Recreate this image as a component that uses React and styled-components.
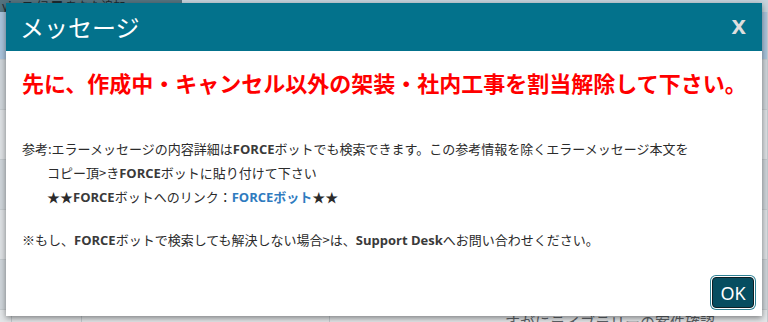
import React from 'react';
import styled, { createGlobalStyle } from 'styled-components';

const GlobalStyle = createGlobalStyle`
  html, body {
    margin: 0;
    padding: 0;
    height: 100%;
  }
  body {
    font-family: "Noto Sans CJK JP", "Noto Sans", sans-serif;
    background: #d9dee2;
    overflow: hidden;
  }
`;

const Page = styled.div`
  position: relative;
  width: 768px;
  height: 322px;
  overflow: hidden;
  display: flex;
  flex-direction: column;
`;

const TopBar = styled.div`
  display: flex;
  height: 12px;
  flex-shrink: 0;
`;

const TopTabs = styled.div`
  width: 180px;
  background: #55737f;
  color: #1c2a30;
  font-size: 12px;
  line-height: 12px;
  white-space: nowrap;
  padding-left: 2px;
`;

const TopRest = styled.div`
  flex: 1;
  background: #c6d3dc;
`;

const BackRow = styled.div`
  display: grid;
  grid-template-columns: 12px 70px 248px 1fr;
  height: ${(p) => p.h}px;
  flex-shrink: 0;
  background: ${(p) => p.bg};
  border-bottom: 1px solid #c4cace;
`;

const BackCell = styled.div`
  border-right: 1px solid #c4cace;
  color: #5d6266;
  font-size: 15px;
  line-height: 20px;
  padding-left: ${(p) => p.pad || 0}px;
  padding-top: 2px;
  white-space: nowrap;
`;

const Dialog = styled.div`
  position: absolute;
  left: 6px;
  top: 3px;
  width: 756px;
  height: 313px;
  background: #fff;
  box-shadow: 0 2px 6px rgba(0, 0, 0, 0.45);
  display: flex;
  flex-direction: column;
`;

const Header = styled.div`
  height: 48px;
  background: #03728c;
  display: flex;
  align-items: center;
  justify-content: space-between;
  padding: 0 16px 0 14px;
  flex-shrink: 0;
`;

const Title = styled.h1`
  margin: 0;
  font-size: 24px;
  font-weight: 400;
  color: #fff;
  line-height: 1;
`;

const Close = styled.button`
  border: 0;
  background: none;
  padding: 0;
  color: #dedede;
  font-family: "Liberation Sans", Arial, sans-serif;
  font-size: 26px;
  font-weight: 700;
  line-height: 1;
  margin-top: -4px;
  cursor: pointer;
`;

const Body = styled.div`
  flex: 1;
  display: flex;
  flex-direction: column;
  padding: 16px 16px 0 16px;
`;

const ErrorHeading = styled.h2`
  margin: 0;
  color: #ff0000;
  font-size: 22px;
  font-weight: 700;
  line-height: 30px;
  white-space: nowrap;
`;

const Note = styled.div`
  margin-top: 40px;
  color: #2b2b2b;
  font-size: 13px;
  line-height: 24px;
`;

const Line = styled.div`
  padding-left: ${(p) => (p.indent ? 25 : 0)}px;
  white-space: nowrap;
`;

const Latin = styled.span`
  font-family: "Open Sans", "Noto Sans", sans-serif;
  font-weight: 700;
  color: #3a3a3a;
`;

const Link = styled.a`
  color: #2f7bbf;
  font-family: "Open Sans", "Noto Sans CJK JP", sans-serif;
  font-weight: 700;
  text-decoration: none;
`;

const Footnote = styled.div`
  margin-top: 19px;
  color: #2b2b2b;
  font-size: 13px;
  line-height: 24px;
  white-space: nowrap;
`;

const Footer = styled.div`
  display: flex;
  justify-content: flex-end;
  padding: 0 8px 8px 0;
  flex-shrink: 0;
`;

const OkButton = styled.button`
  width: 42px;
  height: 31px;
  border-radius: 4px;
  border: 1px solid #0c1f25;
  background: #064d60;
  color: #fff;
  font-family: "Noto Sans", sans-serif;
  font-size: 18px;
  line-height: 1;
  padding: 0;
  box-shadow: 0 0 0 1px #ffffff, 0 0 0 2px #2f8295;
  cursor: pointer;
`;

const rows = [
  { h: 47, bg: '#a9c3da' },
  { h: 49, bg: '#cfd5da' },
  { h: 49, bg: '#dde1e4' },
  { h: 49, bg: '#cfd5da' },
  { h: 49, bg: '#dde1e4' },
  { h: 49, bg: '#cfd5da' },
];

export default function App() {
  return (
    <>
      <GlobalStyle />
      <Page>
        <TopBar>
          <TopTabs>yin ヨ 幻 ■ あなた追加</TopTabs>
          <TopRest />
        </TopBar>
        {rows.map((r, i) => (
          <BackRow key={i} h={r.h} bg={r.bg}>
            <BackCell />
            <BackCell />
            <BackCell />
            <BackCell />
          </BackRow>
        ))}
        <BackRow h={30} bg="#e3e6e8">
          <BackCell />
          <BackCell />
          <BackCell />
          <BackCell pad={175}>すがにライブラリーの案件確認</BackCell>
        </BackRow>

        <Dialog role="dialog">
          <Header>
            <Title>メッセージ</Title>
            <Close aria-label="close">x</Close>
          </Header>
          <Body>
            <ErrorHeading>
              先に、作成中・キャンセル以外の架装・社内工事を割当解除して下さい。
            </ErrorHeading>
            <Note>
              <Line>
                参考:エラーメッセージの内容詳細は<Latin>FORCE</Latin>
                ボットでも検索できます。この参考情報を除くエラーメッセージ本文を
              </Line>
              <Line indent>
                コピー頂&gt;き<Latin>FORCE</Latin>ボットに貼り付けて下さい
              </Line>
              <Line indent>
                ★★<Latin>FORCE</Latin>ボットへのリンク：
                <Link href="#">FORCEボット</Link>★★
              </Line>
            </Note>
            <Footnote>
              ※もし、<Latin>FORCE</Latin>ボットで検索しても解決しない場合&gt;は、
              <Latin>Support Desk</Latin>へお問い合わせください。
            </Footnote>
          </Body>
          <Footer>
            <OkButton>OK</OkButton>
          </Footer>
        </Dialog>
      </Page>
    </>
  );
}
